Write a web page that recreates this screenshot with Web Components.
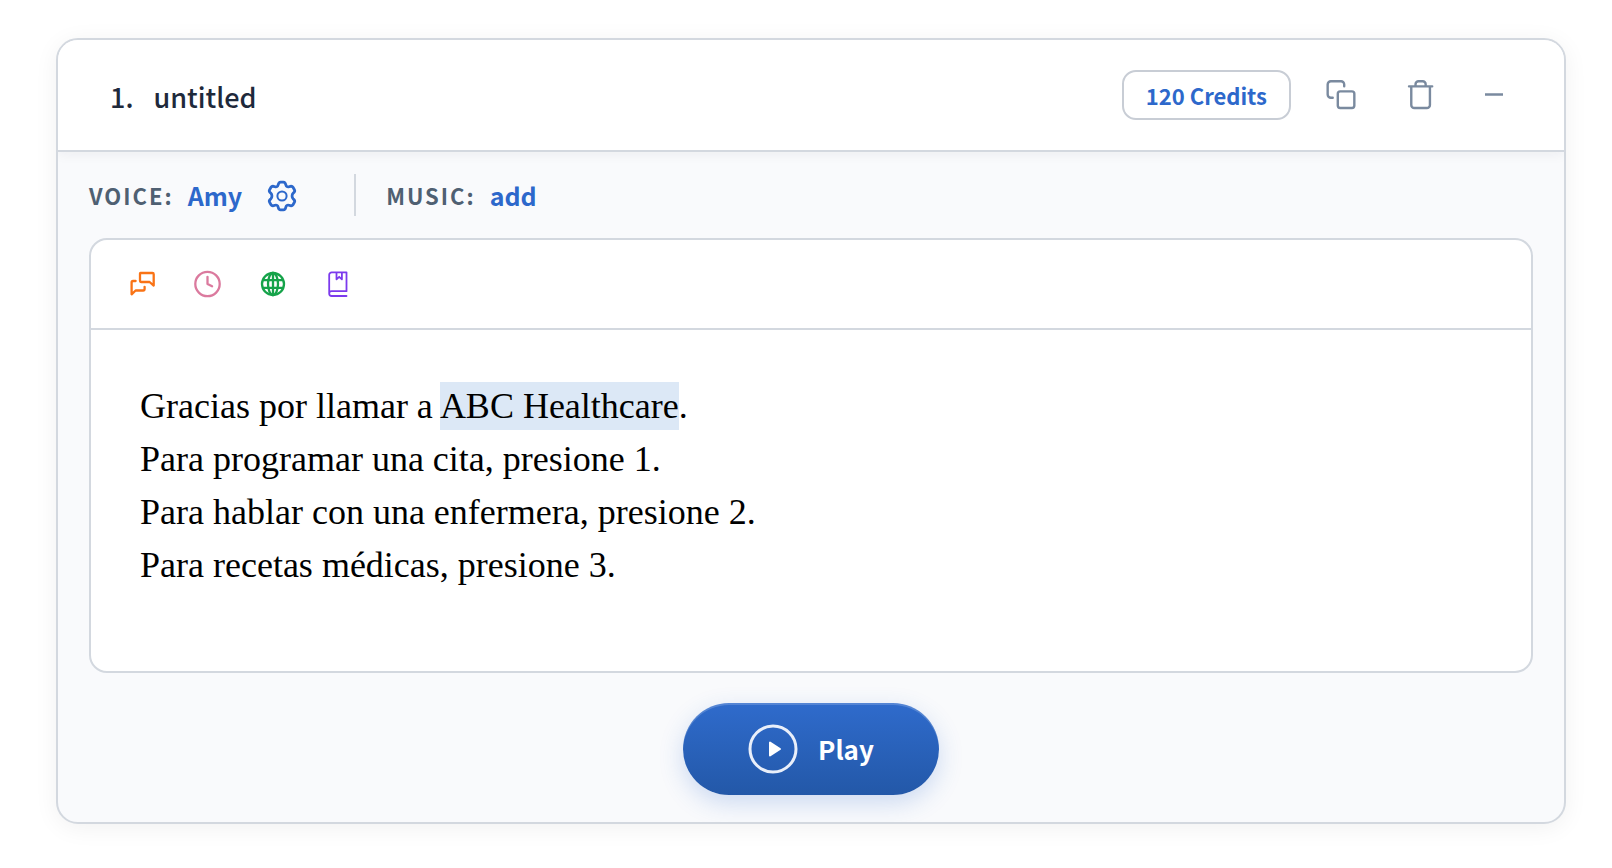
<!DOCTYPE html>
<html lang="es">
<head>
<meta charset="utf-8">
<meta name="viewport" content="width=device-width, initial-scale=1">
<title>Voice prompt editor</title>
<style>
  body {
    margin: 0;
    padding: 38px 46px 42px 56px;
    background: #fff;
    --line: #d3d8df;
    --blue: #2d68cb;
    --ink: #1e293b;
    font-family: "Noto Sans CJK SC", "Liberation Sans", sans-serif;
    color: var(--ink);
  }
  prompt-editor mark { background: #dce8f6; color: inherit; padding: 4px 0; }
</style>
</head>
<body>
<prompt-card>
  <prompt-header slot="header" number="1." name="untitled" credits="120 Credits"></prompt-header>
  <prompt-settings></prompt-settings>
  <prompt-editor>
    <div>Gracias por llamar a <mark>ABC Healthcare</mark>.</div>
    <div>Para programar una cita, presione 1.</div>
    <div>Para hablar con una enfermera, presione 2.</div>
    <div>Para recetas médicas, presione 3.</div>
  </prompt-editor>
  <play-button>Play</play-button>
</prompt-card>

<script>
const base = `
  *, *::before { box-sizing: border-box; }
  button { font: inherit; color: inherit; background: none; border: 0; padding: 0; margin: 0; cursor: pointer; }
  svg { display: block; fill: none; stroke: currentColor; stroke-width: 2; stroke-linecap: round; stroke-linejoin: round; }
`;
class Base extends HTMLElement {
  connectedCallback() {
    if (this.shadowRoot) return;
    this.attachShadow({ mode: "open" }).innerHTML = `<style>${base}${this.css()}</style>${this.html()}`;
  }
}

customElements.define("prompt-card", class extends Base {
  css() { return `
    :host { display: block; }
    section { border: 2px solid var(--line); border-radius: 22px; background: #f9fafc; overflow: hidden;
      box-shadow: 0 4px 24px rgba(0,0,0,.06); }
    .body { display: flex; flex-direction: column; padding: 22px 31px 27px; }
  `; }
  html() { return `<section><slot name="header"></slot><div class="body"><slot></slot></div></section>`; }
});

customElements.define("prompt-header", class extends Base {
  css() { return `
    :host { display: block; }
    header { display: flex; align-items: center; justify-content: space-between; height: 112px;
      padding: 0 53px 0 52px; background: #fff; border-bottom: 2px solid var(--line);
      box-shadow: 0 2px 12px rgba(30,41,59,.06); }
    h2 { display: flex; gap: 20px; margin: 0; padding-top: 4px; font-size: 27px; line-height: 36px; font-weight: 500; }
    .right { display: flex; align-items: center; gap: 26px; }
    .credits { height: 50px; padding: 0 22px; border: 2px solid #c8cdd5; border-radius: 14px;
      color: var(--blue); font-size: 22px; line-height: 46px; font-weight: 700; }
    .icons { display: flex; gap: 32px; color: #7a8a9f; }
    .icons svg { stroke-width: 1.8; }
    .icons button { display: flex; align-items: center; height: 48px; padding: 0 8px; }
  `; }
  html() { return `
    <header>
      <h2><span>${this.getAttribute("number")}</span><span>${this.getAttribute("name")}</span></h2>
      <div class="right">
        <button class="credits">${this.getAttribute("credits")}</button>
        <div class="icons">
          <button aria-label="Duplicate"><svg width="32" height="32" viewBox="0 0 24 24"><rect x="9.600" y="9.300" width="12.400" height="12.400" rx="1.800"/><path d="M5.800 14.100H4.400A2.400 2.400 0 0 1 2 11.700V4.100A2.400 2.400 0 0 1 4.400 1.700H12a2.400 2.400 0 0 1 2.400 2.400V5.500"/></svg></button>
          <button aria-label="Delete"><svg width="32" height="32" viewBox="0 0 24 24"><path d="M3 5.500h17.400M4.700 5.500v14a2.300 2.300 0 0 0 2.300 2.300h9.400a2.300 2.300 0 0 0 2.300-2.300V5.500M7.900 5.300V3.900A2.200 2.200 0 0 1 10.100 1.700h3.200a2.200 2.200 0 0 1 2.200 2.200v1.400"/></svg></button>
          <button aria-label="Collapse"><svg width="18" height="18" viewBox="0 0 18 18" style="stroke-width:2.600;stroke-linecap:butt"><path d="M0 8.500h18"/></svg></button>
        </div>
      </div>
    </header>`; }
});

customElements.define("prompt-settings", class extends Base {
  css() { return `
    :host { display: block; }
    .row { display: flex; align-items: center; height: 42px; margin-bottom: 22px; }
    .group { display: flex; align-items: center; }
    .label { color: #4f6072; font-size: 22px; line-height: 42px; font-weight: 700; letter-spacing: 2px; margin-right: 14px; }
    button { color: var(--blue); font-size: 25px; line-height: 42px; font-weight: 700; }
    .gear { margin-left: 24px; padding-top: 2px; }
    .voice { border-right: 2px solid var(--line); padding-right: 56px; margin-right: 30px; height: 42px; }
  `; }
  html() { return `
    <div class="row">
      <div class="group voice"><span class="label">VOICE:</span><button>Amy</button>
        <button class="gear" aria-label="Voice settings"><svg width="32" height="32" viewBox="0 0 32 32" style="stroke-width:2.800">
          <path d="M12.200 4.800C12.600 2.800 13.400 2.100 14.600 2.100h2.800c1.200 0 2 .7 2.400 2.700.4 1.800 1.600 2.500 3.300 1.900 2.200-.8 3.300-.4 3.900.6l1.400 2.400c.6 1 .3 2.200-1.200 3.400-1.500 1.300-1.500 4.500 0 5.800 1.500 1.200 1.800 2.400 1.200 3.400l-1.400 2.400c-.6 1-1.700 1.400-3.900.6-1.700-.6-2.900.1-3.300 1.900-.4 2-1.200 2.700-2.400 2.700h-2.800c-1.200 0-2-.7-2.400-2.700-.4-1.800-1.600-2.500-3.300-1.900-2.200.8-3.300.4-3.900-.6l-1.400-2.400c-.6-1-.3-2.200 1.200-3.400 1.500-1.300 1.500-4.500 0-5.800-1.500-1.200-1.800-2.400-1.200-3.400l1.400-2.400c.6-1 1.700-1.400 3.900-.6 1.700.6 2.900-.1 3.300-1.900z"/><circle cx="16" cy="16" r="4.600" style="stroke-width:2"/></svg></button></div>
      <div class="group"><span class="label">MUSIC:</span><button>add</button></div>
    </div>`; }
});

customElements.define("prompt-editor", class extends Base {
  css() { return `
    :host { display: block; }
    .box { border: 2px solid var(--line); border-radius: 18px; background: #fff; overflow: hidden; }
    .tools { display: flex; align-items: center; gap: 33px; height: 90px; padding: 0 36px; border-bottom: 2px solid var(--line); }
    .tools svg { width: 32px; height: 32px; stroke-width: 2.300; }
    .text { min-height: 341px; padding: 50px 49px 0; outline: none; color: #000;
      font-family: "Liberation Serif", serif; font-size: 36px; line-height: 53px; }
  `; }
  html() { return `
    <div class="box">
      <div class="tools" role="toolbar" aria-label="Speech tools">
        <button aria-label="Say as" style="color:#f97316"><svg viewBox="0 0 32 32"><path d="M13.500 5H25.400q1.300 0 1.300 1.300V17.600L22.600 14H14.400q-1.400 0-1.400-1.400V5.500q0-.5.500-.5M8.600 13H6q-1.400 0-1.400 1.400V26.300L8.600 22.500H16.200q1.400 0 1.400-1.400V18.800"/></svg></button>
        <button aria-label="Pause" style="color:#db7a9e"><svg viewBox="0 0 32 32"><circle cx="15.500" cy="16" r="12.200"/><path d="M15.500 8.800V16l4.600 2.300"/></svg></button>
        <button aria-label="Language" style="color:#16a34a"><svg viewBox="0 0 32 32"><circle cx="16" cy="16" r="11"/><ellipse cx="16" cy="16" rx="5" ry="11"/><path d="M16 5v22M6 12.200h20M6 19.800h20"/></svg></button>
        <button aria-label="Dictionary" style="color:#7c3aed"><svg viewBox="0 0 32 32" style="stroke-width:1.800"><path d="M24.500 4.300H9.700A2.500 2.500 0 0 0 7.200 6.800V25.500A2.500 2.500 0 0 0 9.700 28H24.500M24.500 4.300V23.200H9.700Q7.200 23.200 7.200 25.500M14.500 4.300v7l2.700-2.500 2.700 2.500v-7"/></svg></button>
      </div>
      <div class="text" contenteditable="true" role="textbox" aria-multiline="true" aria-label="Prompt text" spellcheck="false"><slot></slot></div>
    </div>`; }
});

customElements.define("play-button", class extends Base {
  css() { return `
    :host { display: block; align-self: center; margin-top: 30px; }
    button { display: flex; align-items: center; justify-content: center; gap: 20px; width: 256px; height: 92px;
      border-radius: 46px; color: #fff; font-size: 26px; line-height: 36px; font-weight: 700;
      background: linear-gradient(#2f6bcc, #2358a8);
      box-shadow: 0 8px 24px rgba(45,104,203,.22), inset 0 2px 0 rgba(255,255,255,.18); }
  `; }
  html() { return `<button><svg width="50" height="50" viewBox="0 0 50 50" aria-hidden="true"><circle cx="25" cy="25" r="23" style="stroke-width:3;stroke:#e9effa"/><path d="M22 18.500v13L32 25z" fill="#fff"/></svg><slot></slot></button>`; }
});
</script>
</body>
</html>
